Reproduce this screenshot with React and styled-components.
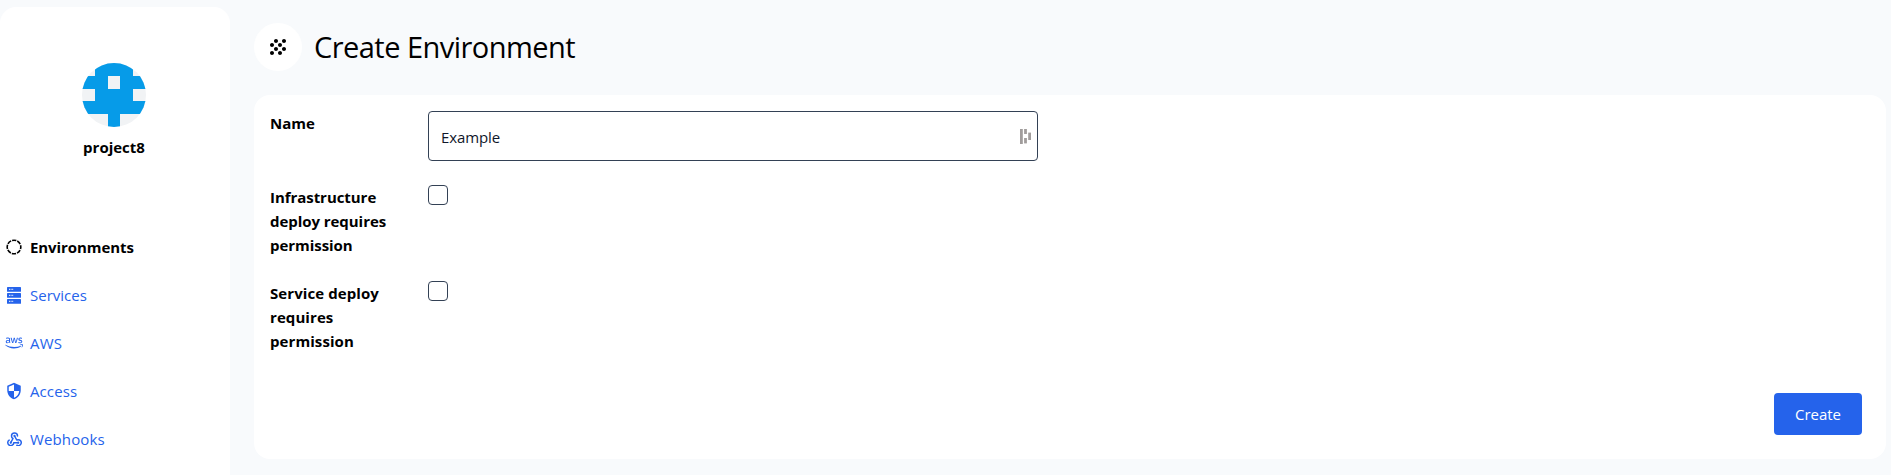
import React from 'react';
import styled, { createGlobalStyle } from 'styled-components';
import { MdGrain, MdSecurity } from 'react-icons/md';
import { FaAws } from 'react-icons/fa';

const GlobalStyle = createGlobalStyle`
  * { box-sizing: border-box; }
  body {
    margin: 0;
    overflow: hidden;
    background: #f8fafc;
    color: #000;
    font-family: 'Open Sans', 'Noto Sans', sans-serif;
    font-size: 15px;
    line-height: 24px;
  }
`;

const Page = styled.div`
  display: flex;
  height: 475px;
`;

const Sidebar = styled.aside`
  width: 230px;
  margin-top: 7px;
  padding-top: 56px;
  flex: none;
  background: #fff;
  border-radius: 16px 16px 0 0;
`;

const Project = styled.div`
  display: flex;
  flex-direction: column;
  align-items: center;
  width: 228px;
  height: 160px;
  gap: 8px;
  font-weight: 700;
`;

const Avatar = styled.svg`
  width: 64px;
  height: 64px;
  border-radius: 50%;
  background: #f1f3f5;
`;

const NavItem = styled.a`
  display: flex;
  align-items: center;
  height: 48px;
  padding-left: 5px;
  gap: 7px;
  color: ${(p) => (p.$active ? '#000' : '#2563eb')};
  font-weight: ${(p) => (p.$active ? 700 : 400)};
  letter-spacing: ${(p) => p.$tracking || 0}px;
`;

const NavIcon = styled.span`
  display: flex;
  align-items: center;
  justify-content: center;
  width: 18px;
  height: 18px;
  font-size: 18px;
`;

const Main = styled.main`
  flex: 1;
  padding: 23px 5px 0 24px;
`;

const Header = styled.header`
  display: flex;
  align-items: center;
  gap: 12px;
  height: 48px;
`;

const HeaderIcon = styled.div`
  display: flex;
  align-items: center;
  justify-content: center;
  width: 48px;
  height: 48px;
  border-radius: 50%;
  background: #fff;
  font-size: 24px;
`;

const Title = styled.h1`
  margin: 0;
  font-size: 29px;
  line-height: 36px;
  font-weight: 400;
  letter-spacing: -0.54px;
`;

const Card = styled.form`
  display: flex;
  flex-direction: column;
  gap: 24px;
  height: 364px;
  margin-top: 24px;
  padding: 16px 24px 24px 16px;
  border-radius: 16px;
  background: #fff;
`;

const Field = styled.div`
  display: flex;
`;

const Label = styled.label`
  width: 158px;
  padding-right: 32px;
  font-weight: 700;
  letter-spacing: ${(p) => p.$tracking || 0}px;
`;

const InputBox = styled.div`
  display: flex;
  align-items: center;
  width: 610px;
  height: 50px;
  padding: 0 6px 0 12px;
  border: 1px solid #334155;
  border-radius: 4px;
`;

const Input = styled.input`
  flex: 1;
  padding: 2px 0 0;
  border: 0;
  outline: 0;
  background: transparent;
  color: #0f172a;
  font: inherit;
  letter-spacing: -0.1px;
`;

const Checkbox = styled.input`
  appearance: none;
  width: 20px;
  height: 20px;
  margin: 0;
  border: 1px solid #334155;
  border-radius: 4px;
`;

const CreateButton = styled.button`
  align-self: flex-end;
  margin-top: auto;
  width: 88px;
  height: 42px;
  padding: 0;
  border: 0;
  border-radius: 4px;
  background: #2563eb;
  color: #fff;
  font: inherit;
`;

const DashedCircle = () => (
  <svg width="16" height="16" viewBox="0 0 16 16" fill="none" stroke="currentColor" strokeWidth="1.6">
    <circle cx="8" cy="8" r="6.8" strokeDasharray="4.3 1.04" strokeDashoffset="2.15" />
  </svg>
);

const ServerStack = () => (
  <svg width="14" height="17" viewBox="0 0 14 17">
    {[0, 6, 12].map((y) => (
      <g key={y}>
        <rect y={y} width="14" height="4.8" rx="0.6" fill="currentColor" />
        <path d={`M2 ${y + 2.3}h1M3.6 ${y + 2.3}h1M5.2 ${y + 2.3}h1`} stroke="#fff" strokeWidth="1" />
      </g>
    ))}
  </svg>
);

const Webhook = () => (
  <svg
    width="15"
    height="14.5"
    viewBox="2 3 20 19"
    fill="none"
    stroke="currentColor"
    strokeWidth="2"
    strokeLinecap="round"
    strokeLinejoin="round"
  >
    <path d="M4.876 13.61a4 4 0 1 0 6.124 3.39h6" />
    <path d="M15.066 20.502a4 4 0 1 0 1.934 -7.502c-.706 0 -1.424 .179 -2 .5l-3 -5.5" />
    <path d="M16 8a4 4 0 1 0 -8 0c0 1.506 .77 2.818 2 3.5l-3 5.5" />
    <path d="M12 8h.01M7 17h.01M17 17h.01" strokeWidth="2.8" />
  </svg>
);

const FieldGlyph = () => (
  <svg width="11" height="15" viewBox="0 0 11 15" fill="#a19d9c">
    <rect width="2.8" height="15" />
    <rect x="4.1" width="2.8" height="5" />
    <rect x="4.1" y="9" width="2.8" height="5.4" />
    <rect x="8.2" y="3.6" width="2.8" height="7.4" />
  </svg>
);

const nav = [
  { label: 'Environments', icon: <DashedCircle />, active: true, tracking: -0.08 },
  { label: 'Services', icon: <ServerStack /> },
  { label: 'AWS', icon: <FaAws />, tracking: 0.2 },
  { label: 'Access', icon: <MdSecurity />, tracking: 0.1 },
  { label: 'Webhooks', icon: <Webhook />, tracking: 0.12 },
];

export default function App() {
  return (
    <>
      <GlobalStyle />
      <Page>
        <Sidebar>
          <Project>
            <Avatar viewBox="0 0 64 64" shapeRendering="crispEdges" fill="#069be8">
              <path d="M13 0h38v13h13v13H51v12h13v13H38v13H26V51H0V38h13V26H0V13h13zM26 13v13h12V13z" fillRule="evenodd" />
            </Avatar>
            <span>project8</span>
          </Project>
          <nav>
            {nav.map((n) => (
              <NavItem key={n.label} $active={n.active} $tracking={n.tracking}>
                <NavIcon>{n.icon}</NavIcon>
                <span>{n.label}</span>
              </NavItem>
            ))}
          </nav>
        </Sidebar>
        <Main>
          <Header>
            <HeaderIcon><MdGrain /></HeaderIcon>
            <Title>Create Environment</Title>
          </Header>
          <Card>
            <Field>
              <Label>Name</Label>
              <InputBox>
                <Input defaultValue="Example" />
                <FieldGlyph />
              </InputBox>
            </Field>
            <Field>
              <Label $tracking={-0.05}>Infrastructure deploy requires permission</Label>
              <Checkbox type="checkbox" />
            </Field>
            <Field>
              <Label $tracking={0.08}>Service deploy requires permission</Label>
              <Checkbox type="checkbox" />
            </Field>
            <CreateButton type="button">Create</CreateButton>
          </Card>
        </Main>
      </Page>
    </>
  );
}
